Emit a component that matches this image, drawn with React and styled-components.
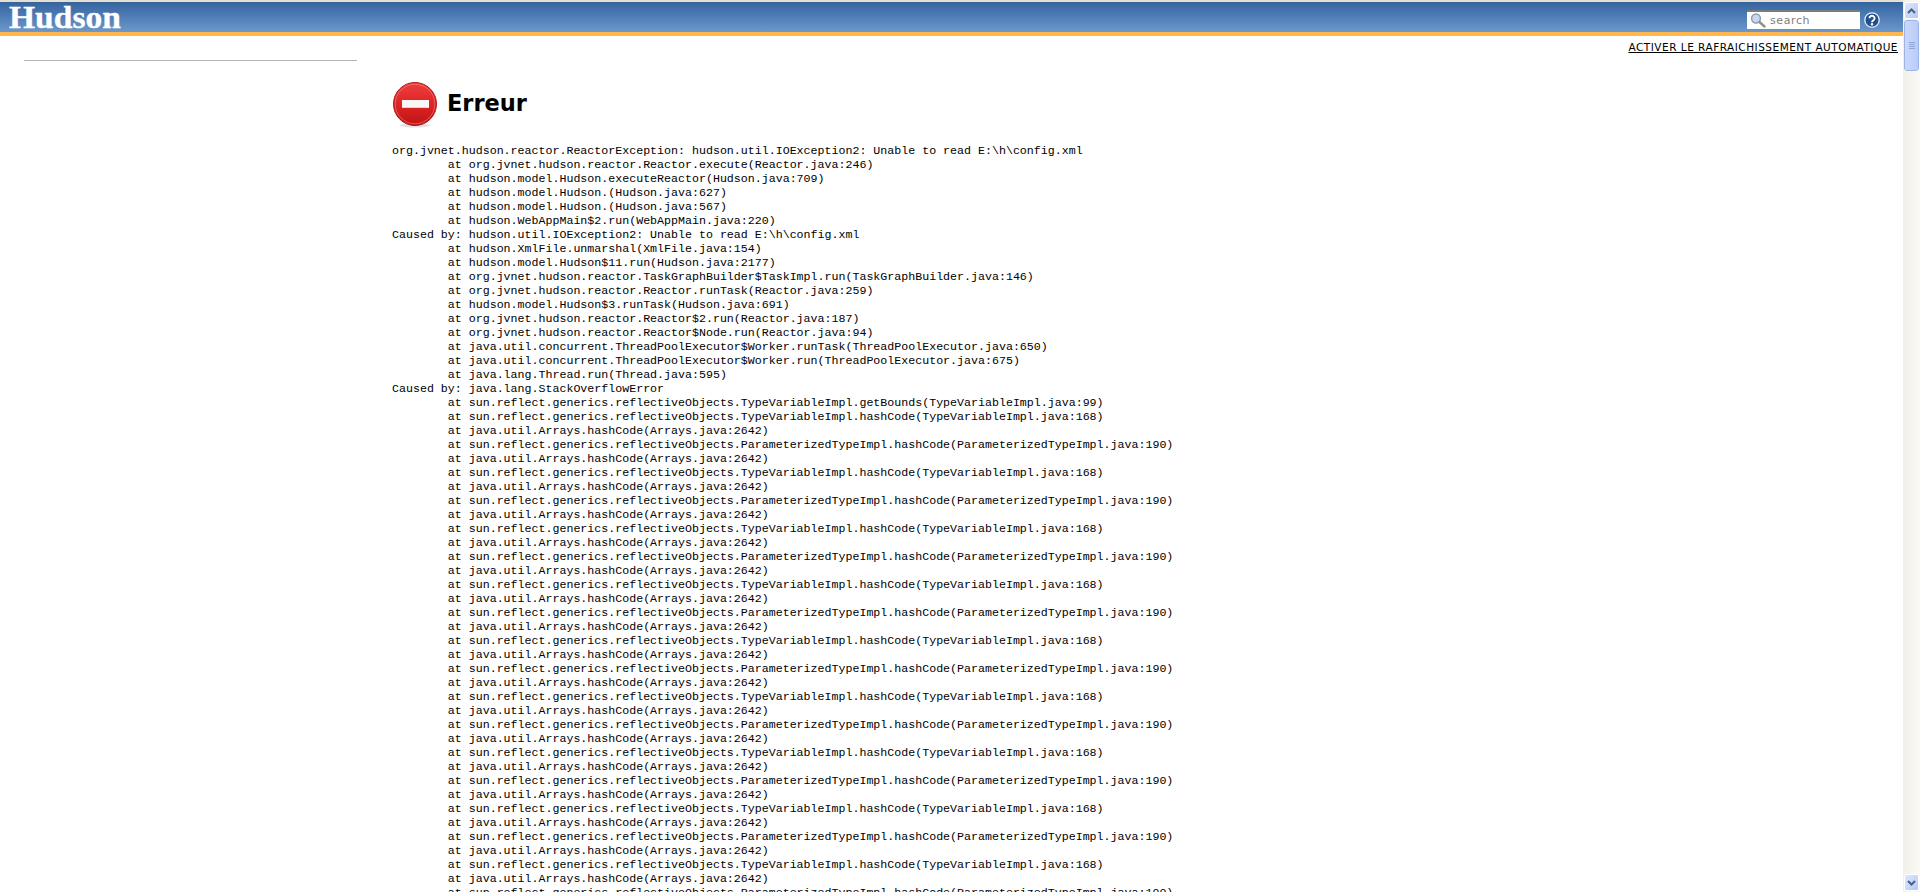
import React from 'react';
import styled, { createGlobalStyle } from 'styled-components';

const GlobalStyle = createGlobalStyle`
  html, body {
    margin: 0;
    padding: 0;
    height: 892px;
    overflow: hidden;
    background: #fff;
    font-family: 'DejaVu Sans', sans-serif;
  }
`;

const Window = styled.div`
  display: flex;
  width: 1920px;
  height: 892px;
  overflow: hidden;
`;

const Page = styled.div`
  flex: 1;
  min-width: 0;
  display: flex;
  flex-direction: column;
`;

const Header = styled.header`
  height: 30px;
  flex: none;
  display: flex;
  align-items: center;
  justify-content: space-between;
  border-top: 2px solid #e4dfd0;
  border-bottom: 4px solid #ffb64c;
  background: linear-gradient(to bottom, #34639f, #6c98cb);
`;

const Logo = styled.div`
  margin-left: 9px;
  padding-top: 2px;
  font: bold 30.5px 'Liberation Serif', serif;
  -webkit-text-stroke: 0.3px #fff;
  transform: scaleX(1.1);
  transform-origin: left center;
  color: #fff;
  line-height: 30px;
`;

const SearchArea = styled.div`
  display: flex;
  align-items: center;
  gap: 4px;
  margin-right: 23px;
  margin-top: 5px;
`;

const SearchBox = styled.div`
  width: 113px;
  height: 19px;
  display: flex;
  align-items: center;
  gap: 4px;
  background: #fff;
  border-top: 2px solid #7b7b7b;
  padding-left: 3px;
  box-sizing: border-box;
  font-size: 11px;
  letter-spacing: 0.6px;
  color: #808080;
`;

const RefreshRow = styled.div`
  display: flex;
  justify-content: flex-end;
  padding: 4px 5px 0 0;
  height: 16px;
`;

const RefreshLink = styled.a`
  font-size: 10.5px;
  line-height: 14px;
  letter-spacing: 0.5px;
  color: #000;
  text-decoration: underline;
  text-transform: uppercase;
`;

const Body = styled.div`
  display: flex;
  flex: 1;
  min-height: 0;
`;

const SidePanel = styled.aside`
  width: 392px;
  flex: none;
  padding: 4px 35px 0 24px;
  box-sizing: border-box;
`;

const SideRule = styled.div`
  height: 1px;
  background: #b4b4b4;
`;

const Main = styled.main`
  flex: 1;
  min-width: 0;
`;

const TitleRow = styled.div`
  display: flex;
  align-items: center;
  gap: 7px;
  margin-top: 22px;
  height: 50px;
`;

const Title = styled.h1`
  margin: 0;
  font-size: 22.5px;
  font-weight: bold;
  color: #000;
`;

const Trace = styled.pre`
  margin: 16px 0 0;
  font: 11.63px/14px 'Liberation Mono', monospace;
  tab-size: 8;
  color: #000;
`;

const Scrollbar = styled.div`
  width: 17px;
  flex: none;
  display: flex;
  flex-direction: column;
  box-sizing: border-box;
  padding: 2px 1px 1px 1px;
  gap: 1px;
  background: linear-gradient(to right, #f0efe8, #fbfaf6);
`;

const ScrollButton = styled.div`
  height: 15px;
  flex: none;
  border: 1px solid #fff;
  border-radius: 2px;
  background: linear-gradient(to bottom right, #dfe8fd, #b4c8f6);
  display: flex;
  align-items: center;
  justify-content: center;
`;

const ScrollThumb = styled.div`
  height: 49px;
  flex: none;
  border: 1px solid #fff;
  outline: 1px solid #9db3e6;
  outline-offset: -1px;
  border-radius: 3px;
  background: linear-gradient(to right, #cbd8fb, #b9ccf8);
  display: flex;
  flex-direction: column;
  align-items: center;
  justify-content: center;
  gap: 1px;
`;

const Grip = styled.span`
  width: 6px;
  height: 1px;
  background: #8ea5dc;
`;

const ScrollSpacer = styled.div`
  flex: 1;
`;

const StopIcon = () => (
  <svg width="48" height="50" viewBox="0 0 48 50">
    <defs>
      <linearGradient id="stopFill" x1="0" y1="0" x2="0" y2="1">
        <stop offset="0%" stopColor="#ee3f3f" />
        <stop offset="55%" stopColor="#dc2222" />
        <stop offset="100%" stopColor="#c01414" />
      </linearGradient>
    </defs>
    <ellipse cx="23" cy="47.5" rx="15" ry="2" fill="#e2e2e2" />
    <circle cx="23" cy="26" r="21.5" fill="url(#stopFill)" stroke="#b01818" strokeWidth="1" />
    <circle cx="23" cy="26" r="19.8" fill="none" stroke="#f39a9a" strokeWidth="0.7" opacity="0.7" />
    <rect x="10" y="22" width="27" height="8" fill="#f8f8f8" />
    <rect x="10" y="29" width="27" height="1" fill="#d9d9d9" />
  </svg>
);

const SearchIcon = () => (
  <svg width="16" height="15" viewBox="0 0 16 15">
    <circle cx="6" cy="5.5" r="4.4" fill="#c7d9f0" stroke="#8e9db2" strokeWidth="1.5" />
    <path d="M9.5 9L14.5 13.5" stroke="#97907f" strokeWidth="2.4" strokeLinecap="round" />
  </svg>
);

const HelpIcon = () => (
  <svg width="16" height="16" viewBox="0 0 16 16">
    <circle cx="8" cy="8" r="7.2" fill="#1f4f8f" stroke="#e8eef6" strokeWidth="1.3" />
    <path d="M5.4 6.2a2.6 2.4 0 1 1 4 2c-1 .7-1.4 1-1.4 2" fill="none" stroke="#fff" strokeWidth="1.9" />
    <circle cx="8" cy="12.3" r="1.2" fill="#fff" />
  </svg>
);

const Chevron = ({ up }) => (
  <svg width="9" height="6" viewBox="0 0 9 6">
    <path d={up ? 'M1 5L4.5 1.5L8 5' : 'M1 1L4.5 4.5L8 1'} fill="none" stroke="#4d6185" strokeWidth="2" />
  </svg>
);

const head = [
  'org.jvnet.hudson.reactor.ReactorException: hudson.util.IOException2: Unable to read E:\\h\\config.xml',
  '\tat org.jvnet.hudson.reactor.Reactor.execute(Reactor.java:246)',
  '\tat hudson.model.Hudson.executeReactor(Hudson.java:709)',
  '\tat hudson.model.Hudson.(Hudson.java:627)',
  '\tat hudson.model.Hudson.(Hudson.java:567)',
  '\tat hudson.WebAppMain$2.run(WebAppMain.java:220)',
  'Caused by: hudson.util.IOException2: Unable to read E:\\h\\config.xml',
  '\tat hudson.XmlFile.unmarshal(XmlFile.java:154)',
  '\tat hudson.model.Hudson$11.run(Hudson.java:2177)',
  '\tat org.jvnet.hudson.reactor.TaskGraphBuilder$TaskImpl.run(TaskGraphBuilder.java:146)',
  '\tat org.jvnet.hudson.reactor.Reactor.runTask(Reactor.java:259)',
  '\tat hudson.model.Hudson$3.runTask(Hudson.java:691)',
  '\tat org.jvnet.hudson.reactor.Reactor$2.run(Reactor.java:187)',
  '\tat org.jvnet.hudson.reactor.Reactor$Node.run(Reactor.java:94)',
  '\tat java.util.concurrent.ThreadPoolExecutor$Worker.runTask(ThreadPoolExecutor.java:650)',
  '\tat java.util.concurrent.ThreadPoolExecutor$Worker.run(ThreadPoolExecutor.java:675)',
  '\tat java.lang.Thread.run(Thread.java:595)',
  'Caused by: java.lang.StackOverflowError',
  '\tat sun.reflect.generics.reflectiveObjects.TypeVariableImpl.getBounds(TypeVariableImpl.java:99)',
  '\tat sun.reflect.generics.reflectiveObjects.TypeVariableImpl.hashCode(TypeVariableImpl.java:168)',
];

// the overflow repeats this cycle until it runs off the page
const cycle = [
  '\tat java.util.Arrays.hashCode(Arrays.java:2642)',
  '\tat sun.reflect.generics.reflectiveObjects.ParameterizedTypeImpl.hashCode(ParameterizedTypeImpl.java:190)',
  '\tat java.util.Arrays.hashCode(Arrays.java:2642)',
  '\tat sun.reflect.generics.reflectiveObjects.TypeVariableImpl.hashCode(TypeVariableImpl.java:168)',
];

const lines = [...head];
for (let i = 0; i < 34; i++) lines.push(cycle[i % 4]);

const App = () => (
  <Window>
    <GlobalStyle />
    <Page>
      <Header>
        <Logo>Hudson</Logo>
        <SearchArea>
          <SearchBox>
            <SearchIcon />
            search
          </SearchBox>
          <HelpIcon />
        </SearchArea>
      </Header>
      <RefreshRow>
        <RefreshLink href="#">Activer le rafraichissement automatique</RefreshLink>
      </RefreshRow>
      <Body>
        <SidePanel>
          <SideRule />
        </SidePanel>
        <Main>
          <TitleRow>
            <StopIcon />
            <Title>Erreur</Title>
          </TitleRow>
          <Trace>{lines.join('\n')}</Trace>
        </Main>
      </Body>
    </Page>
    <Scrollbar>
      <ScrollButton>
        <Chevron up />
      </ScrollButton>
      <ScrollThumb>
        <Grip />
        <Grip />
        <Grip />
        <Grip />
      </ScrollThumb>
      <ScrollSpacer />
      <ScrollButton>
        <Chevron />
      </ScrollButton>
    </Scrollbar>
  </Window>
);

export default App;
